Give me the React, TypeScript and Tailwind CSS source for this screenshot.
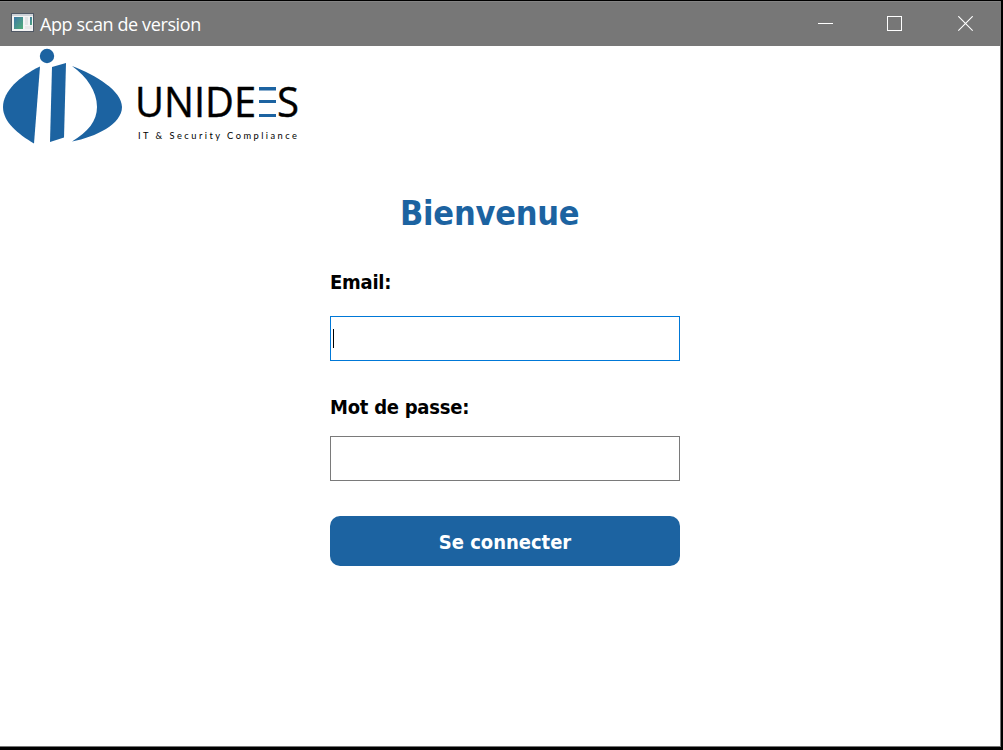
import React from "react";

function AppIcon() {
  return (
    <svg width="23" height="20" viewBox="0 0 23 20" className="-mt-[2px]" aria-hidden="true">
      <defs>
        <linearGradient id="pane" x1="0" y1="0" x2="1" y2="1">
          <stop offset="0" stopColor="#3f78a8" />
          <stop offset="1" stopColor="#52ae78" />
        </linearGradient>
      </defs>
      <rect x="0.5" y="0.5" width="22" height="18" fill="#f4f4f4" stroke="#515966" />
      <rect x="1" y="1" width="21" height="2" fill="#cfd3d8" />
      <rect x="3" y="4" width="9" height="12" fill="url(#pane)" />
      <rect x="14" y="4" width="3" height="8" fill="#e3e5e6" />
      <rect x="19" y="4" width="2" height="8" fill="url(#pane)" />
      <rect x="14" y="13" width="7" height="3" fill="#e9e9e9" />
    </svg>
  );
}

function TitleBar() {
  return (
    <header className="flex h-[45px] items-center border-t border-[#858585] bg-[#777777]">
      <div className="flex flex-1 items-center gap-[6px] pl-[11px]">
        <AppIcon />
        <span className="-mt-px text-[18px] leading-6 tracking-[-0.39px] text-white [font-family:'Open_Sans','Noto_Sans',sans-serif]">
          App scan de version
        </span>
      </div>
      <div className="flex">
        <button aria-label="Réduire" className="flex h-11 w-[70px] items-center justify-center">
          <svg width="15" height="16" stroke="#fff" fill="none"><path d="M0 7.5H15" /></svg>
        </button>
        <button aria-label="Agrandir" className="flex h-11 w-[69px] items-center justify-center">
          <svg width="15" height="16" stroke="#fff" fill="none"><rect x="0.5" y="0.5" width="14" height="14" /></svg>
        </button>
        <button aria-label="Fermer" className="flex h-11 w-[71px] items-center justify-center pl-[2px]">
          <svg width="15" height="16" stroke="#fff" strokeWidth="1.2" fill="none"><path d="M0.3 0.3 14.7 14.7M14.7 0.3 0.3 14.7" /></svg>
        </button>
      </div>
    </header>
  );
}

function Logo() {
  return (
    <svg width="310" height="104" viewBox="0 46 310 104" className="block" role="img" aria-label="UNIDEES">
      <g fill="#1c63a1">
        <circle cx="47" cy="56" r="7.2" />
        <path d="M40 66.5C20 76 3 91 3 107C3 122 18 134 34 143.5Z" />
        <path d="M52 67 66 63 64 137.5 50 142Z" />
        <path d="M72 66C96 75 122 91 122 107C122 124 96 137 72 141.500C88 132 97 121 97 107C97 91 87 77 72 66Z" />
        <rect x="259" y="87" width="17" height="3.500" />
        <rect x="259" y="100" width="17" height="3" />
        <rect x="259" y="114" width="17" height="3" />
      </g>
      <g fill="#000" className="[font-family:'Open_Sans','Noto_Sans',sans-serif]">
        <text x="135" y="117" fontSize="42" textLength="121" lengthAdjust="spacingAndGlyphs" stroke="#000" strokeWidth="0.400">UNIDE</text>
        <text x="277" y="117" fontSize="42" textLength="22" lengthAdjust="spacingAndGlyphs" stroke="#000" strokeWidth="0.400">S</text>
        <text x="138" y="139" fontSize="9.300" textLength="159" lengthAdjust="spacing" className="[font-family:Lato,sans-serif]">IT &amp; Security Compliance</text>
      </g>
    </svg>
  );
}

const labelClass =
  "block text-[20px] leading-6 font-bold tracking-[-0.25px] text-black [font-family:'DejaVu_Sans_Condensed','DejaVu_Sans',sans-serif]";

export default function App() {
  return (
    <div className="h-[750px] w-[1003px] overflow-hidden bg-black pt-px">
      <div className="flex h-[746px] w-[1001px] flex-col border-r border-b border-[#777777] bg-white">
        <TitleBar />
        <main>
          <Logo />
          <form className="ml-[330px] w-[350px]" onSubmit={(e) => e.preventDefault()}>
            <h1 className="mt-[42px] h-[42px] pl-[70px] text-[34px] leading-[42px] font-bold tracking-[-0.22px] whitespace-nowrap text-[#1c63a1] [font-family:'DejaVu_Sans_Condensed','DejaVu_Sans',sans-serif]">
              Bienvenue
            </h1>
            <label htmlFor="email" className={labelClass + " mt-9"}>Email:</label>
            <div className="mt-[22px] flex h-[45px] items-center border border-[#0078d7] pl-[2px]">
              <span className="h-[19px] w-px shrink-0 bg-black" />
              <input id="email" type="text" className="h-full w-full outline-none" />
            </div>
            <label htmlFor="password" className={labelClass + " mt-[34px]"}>Mot de passe:</label>
            <input id="password" type="password" className="mt-[17px] block h-[45px] w-full border border-[#7a7a7a] px-1 outline-none" />
            <button className="mt-[35px] block h-[50px] w-full rounded-[10px] bg-[#1c63a1] pt-px text-[20px] font-bold tracking-[-0.02px] text-white [font-family:'DejaVu_Sans_Condensed','DejaVu_Sans',sans-serif]">
              Se connecter
            </button>
          </form>
        </main>
      </div>
    </div>
  );
}
